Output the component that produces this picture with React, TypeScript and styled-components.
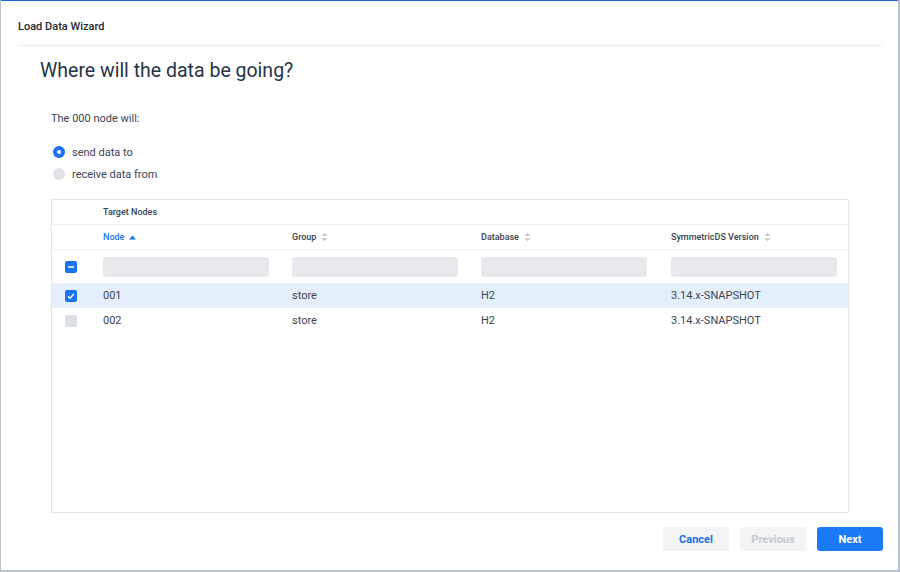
import React from "react";
import styled, { createGlobalStyle } from "styled-components";

const Global = createGlobalStyle`
  html, body { margin: 0; padding: 0; background: #b9c1cc; }
  body { font-family: Roboto, "Liberation Sans", Arial, sans-serif; }
  * { box-sizing: border-box; }
`;

const Dialog = styled.div`
  width: 897px;
  height: 570px;
  margin: 0 2px 0 1px;
  background: #fff;
  border-top: 1px solid #1767d0;
  display: flex;
  flex-direction: column;
`;

const Header = styled.div`
  margin: 0 16px 0 17px;
  height: 45px;
  padding-top: 19px;
  border-bottom: 1px solid #e9eaec;
  font-size: 11px;
  line-height: 14px;
  font-weight: 500;
  color: #1f2733;
`;

const Body = styled.div`
  flex: 1;
  display: flex;
  flex-direction: column;
  padding: 13px 49px 0 39px;
`;

const Heading = styled.h1`
  margin: 0;
  font-size: 19.5px;
  line-height: 24px;
  font-weight: 400;
  color: #263445;
`;

const Section = styled.div`
  padding-left: 11px;
  display: flex;
  flex-direction: column;
`;

const Label = styled.div`
  margin-top: 28px;
  font-size: 11px;
  line-height: 16px;
  color: #3b4452;
`;

const RadioGroup = styled.div`
  margin-top: 14px;
  display: flex;
  flex-direction: column;
`;

const RadioRow = styled.label`
  height: 22px;
  display: flex;
  align-items: center;
  gap: 7px;
  padding-left: 2px;
  font-size: 11px;
  color: #3b4452;
`;

const RadioDot = styled.span<{ $on?: boolean }>`
  width: 12px;
  height: 12px;
  border-radius: 50%;
  background: ${(p) => (p.$on ? "#1a73f0" : "#dfe2e7")};
  display: flex;
  align-items: center;
  justify-content: center;
  &::after {
    content: "";
    width: 4px;
    height: 4px;
    border-radius: 50%;
    background: ${(p) => (p.$on ? "#fff" : "transparent")};
  }
`;

const TableBox = styled.div`
  margin-top: 14px;
  height: 314px;
  border: 1px solid #e3e5e8;
  display: flex;
  flex-direction: column;
`;

const GridRow = styled.div<{ $h: number; $sel?: boolean; $line?: boolean }>`
  display: grid;
  grid-template-columns: 43px 189px 189px 190px 1fr;
  height: ${(p) => p.$h}px;
  align-items: center;
  background: ${(p) => (p.$sel ? "#e5effb" : "transparent")};
  border-bottom: ${(p) => (p.$line ? "1px solid #eceef1" : "none")};
`;

const Caption = styled.div`
  grid-column: 2 / 6;
  padding-left: 8px;
  font-size: 9px;
  font-weight: 500;
  color: #3a4350;
`;

const HeadCell = styled.div<{ $active?: boolean }>`
  padding-left: 8px;
  font-size: 9px;
  font-weight: 500;
  color: ${(p) => (p.$active ? "#1a73f0" : "#3a4350")};
  display: flex;
  align-items: center;
  gap: 5px;
`;

const Cell = styled.div`
  padding-left: 8px;
  font-size: 11px;
  color: #3b4452;
`;

const CheckCell = styled.div`
  display: flex;
  justify-content: center;
  padding-right: 5px;
`;

const FilterCell = styled.div`
  padding-left: 8px;
`;

const FilterInput = styled.div`
  width: 166px;
  height: 20px;
  border-radius: 3px;
  background: #e7e9ed;
`;

const Box = styled.span<{ $on?: boolean }>`
  width: 12px;
  height: 12px;
  border-radius: 2px;
  background: ${(p) => (p.$on ? "#1a73f0" : "#dcdfe4")};
  display: flex;
  align-items: center;
  justify-content: center;
`;

const Footer = styled.div`
  display: flex;
  justify-content: flex-end;
  gap: 11px;
  padding: 14px 15px 19px 0;
`;

const Button = styled.button<{ $variant: "primary" | "secondary" | "disabled" }>`
  width: 66px;
  height: 24px;
  border: none;
  border-radius: 3px;
  font-family: inherit;
  font-size: 11px;
  font-weight: 700;
  background: ${(p) => (p.$variant === "primary" ? "#1a7af8" : "#f2f4f6")};
  color: ${(p) =>
    p.$variant === "primary" ? "#fff" : p.$variant === "secondary" ? "#1a6ee6" : "#c3c8cf"};
`;

const SortUp = () => (
  <svg width="7" height="5" viewBox="0 0 7 5">
    <path d="M0 4.5 L3.5 0.5 L7 4.5 Z" fill="#1a73f0" />
  </svg>
);

const SortBoth = () => (
  <svg width="7" height="10" viewBox="0 0 7 10">
    <path d="M0.5 4 L3.5 0.5 L6.5 4 Z" fill="#c8ccd2" />
    <path d="M0.5 6 L3.5 9.5 L6.5 6 Z" fill="#c8ccd2" />
  </svg>
);

const Minus = () => (
  <svg width="8" height="8" viewBox="0 0 8 8">
    <path d="M1 4 H7" stroke="#fff" strokeWidth="1.5" />
  </svg>
);

const Check = () => (
  <svg width="8" height="8" viewBox="0 0 8 8">
    <path d="M1 4.2 L3.1 6.2 L7 1.8" stroke="#fff" strokeWidth="1.3" fill="none" />
  </svg>
);

const rows = [
  { node: "001", group: "store", db: "H2", ver: "3.14.x-SNAPSHOT", sel: true },
  { node: "002", group: "store", db: "H2", ver: "3.14.x-SNAPSHOT", sel: false },
];

export default function App() {
  return (
    <>
      <Global />
      <Dialog>
        <Header>Load Data Wizard</Header>
        <Body>
          <Heading>Where will the data be going?</Heading>
          <Section>
            <Label>The 000 node will:</Label>
            <RadioGroup>
              <RadioRow>
                <RadioDot $on />
                send data to
              </RadioRow>
              <RadioRow>
                <RadioDot />
                receive data from
              </RadioRow>
            </RadioGroup>
            <TableBox>
              <GridRow $h={25} $line>
                <div />
                <Caption>Target Nodes</Caption>
              </GridRow>
              <GridRow $h={25} $line>
                <div />
                <HeadCell $active>
                  Node <SortUp />
                </HeadCell>
                <HeadCell>
                  Group <SortBoth />
                </HeadCell>
                <HeadCell>
                  Database <SortBoth />
                </HeadCell>
                <HeadCell>
                  SymmetricDS Version <SortBoth />
                </HeadCell>
              </GridRow>
              <GridRow $h={33}>
                <CheckCell>
                  <Box $on>
                    <Minus />
                  </Box>
                </CheckCell>
                <FilterCell><FilterInput /></FilterCell>
                <FilterCell><FilterInput /></FilterCell>
                <FilterCell><FilterInput /></FilterCell>
                <FilterCell><FilterInput /></FilterCell>
              </GridRow>
              {rows.map((r) => (
                <GridRow key={r.node} $h={25} $sel={r.sel}>
                  <CheckCell>
                    <Box $on={r.sel}>{r.sel && <Check />}</Box>
                  </CheckCell>
                  <Cell>{r.node}</Cell>
                  <Cell>{r.group}</Cell>
                  <Cell>{r.db}</Cell>
                  <Cell>{r.ver}</Cell>
                </GridRow>
              ))}
            </TableBox>
          </Section>
        </Body>
        <Footer>
          <Button $variant="secondary">Cancel</Button>
          <Button $variant="disabled">Previous</Button>
          <Button $variant="primary">Next</Button>
        </Footer>
      </Dialog>
    </>
  );
}
